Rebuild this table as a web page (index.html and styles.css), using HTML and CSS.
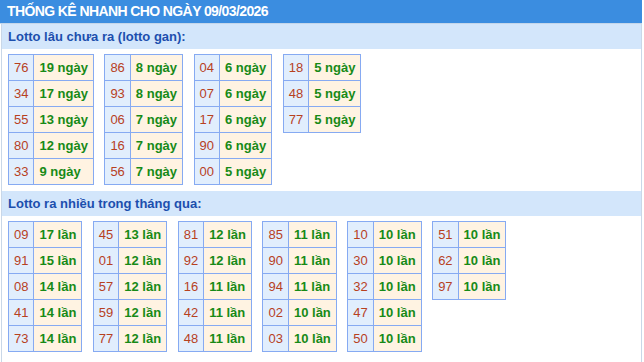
FILE: index.html
```html
<!DOCTYPE html>
<html lang="vi">
<head>
<meta charset="utf-8">
<link rel="stylesheet" href="styles.css">
</head>
<body>
<div class="wrap">
  <div class="top">THỐNG KÊ NHANH CHO NGÀY 09/03/2026</div>
  <div class="box">
    <div class="sec">Lotto lâu chưa ra (lotto gan):</div>
    <div class="tables">
      <table><tr><td class="n">76</td><td class="v">19 ngày</td></tr><tr><td class="n">34</td><td class="v">17 ngày</td></tr><tr><td class="n">55</td><td class="v">13 ngày</td></tr><tr><td class="n">80</td><td class="v">12 ngày</td></tr><tr><td class="n">33</td><td class="v">9 ngày</td></tr></table>
      <table><tr><td class="n">86</td><td class="v">8 ngày</td></tr><tr><td class="n">93</td><td class="v">8 ngày</td></tr><tr><td class="n">06</td><td class="v">7 ngày</td></tr><tr><td class="n">16</td><td class="v">7 ngày</td></tr><tr><td class="n">56</td><td class="v">7 ngày</td></tr></table>
      <table><tr><td class="n">04</td><td class="v">6 ngày</td></tr><tr><td class="n">07</td><td class="v">6 ngày</td></tr><tr><td class="n">17</td><td class="v">6 ngày</td></tr><tr><td class="n">90</td><td class="v">6 ngày</td></tr><tr><td class="n">00</td><td class="v">5 ngày</td></tr></table>
      <table><tr><td class="n">18</td><td class="v">5 ngày</td></tr><tr><td class="n">48</td><td class="v">5 ngày</td></tr><tr><td class="n">77</td><td class="v">5 ngày</td></tr></table>
    </div>
    <div class="sec">Lotto ra nhiều trong tháng qua:</div>
    <div class="tables">
      <table><tr><td class="n">09</td><td class="v">17 lần</td></tr><tr><td class="n">91</td><td class="v">15 lần</td></tr><tr><td class="n">08</td><td class="v">14 lần</td></tr><tr><td class="n">41</td><td class="v">14 lần</td></tr><tr><td class="n">73</td><td class="v">14 lần</td></tr></table>
      <table><tr><td class="n">45</td><td class="v">13 lần</td></tr><tr><td class="n">01</td><td class="v">12 lần</td></tr><tr><td class="n">57</td><td class="v">12 lần</td></tr><tr><td class="n">59</td><td class="v">12 lần</td></tr><tr><td class="n">77</td><td class="v">12 lần</td></tr></table>
      <table><tr><td class="n">81</td><td class="v">12 lần</td></tr><tr><td class="n">92</td><td class="v">12 lần</td></tr><tr><td class="n">16</td><td class="v">11 lần</td></tr><tr><td class="n">42</td><td class="v">11 lần</td></tr><tr><td class="n">48</td><td class="v">11 lần</td></tr></table>
      <table><tr><td class="n">85</td><td class="v">11 lần</td></tr><tr><td class="n">90</td><td class="v">11 lần</td></tr><tr><td class="n">94</td><td class="v">11 lần</td></tr><tr><td class="n">02</td><td class="v">10 lần</td></tr><tr><td class="n">03</td><td class="v">10 lần</td></tr></table>
      <table><tr><td class="n">10</td><td class="v">10 lần</td></tr><tr><td class="n">30</td><td class="v">10 lần</td></tr><tr><td class="n">32</td><td class="v">10 lần</td></tr><tr><td class="n">47</td><td class="v">10 lần</td></tr><tr><td class="n">50</td><td class="v">10 lần</td></tr></table>
      <table><tr><td class="n">51</td><td class="v">10 lần</td></tr><tr><td class="n">62</td><td class="v">10 lần</td></tr><tr><td class="n">97</td><td class="v">10 lần</td></tr></table>
    </div>
  </div>
</div>
</body>
</html>
```
FILE: styles.css
```css
html, body {
  margin: 0;
  padding: 0;
  background: #fff;
}
body {
  font-family: "Liberation Sans", Arial, sans-serif;
  font-size: 13px;
}
.wrap {
  width: 642px;
  height: 362px;
  display: flex;
  flex-direction: column;
}
.top {
  height: 23px;
  line-height: 23px;
  background: #3b8de0;
  color: #fff;
  font-weight: bold;
  font-size: 14px;
  letter-spacing: -0.6px;
  padding-left: 7px;
  border-bottom: 1px solid #c4d6ea;
}
.box {
  flex: 1;
  margin-left: 1px;
  border-left: 1px solid #c9d7e8;
  border-right: 1px solid #c9d7e8;
}
.sec {
  height: 25px;
  line-height: 25px;
  background: #d3e6fb;
  color: #1c4fae;
  font-weight: bold;
  font-size: 13px;
  padding-left: 6px;
}
.tables {
  display: flex;
  align-items: flex-start;
  gap: 10.5px;
  padding: 5px 0 6px 6px;
}
table {
  border-collapse: collapse;
}
td {
  border: 1px solid #86aaf2;
  padding: 5px 5px;
  line-height: 15px;
  white-space: nowrap;
}
td.n {
  background: #e1eefd;
  color: #b7411f;
  text-align: center;
}
td.v {
  background: #fff3e2;
  color: #178a17;
  font-weight: bold;
}
```
